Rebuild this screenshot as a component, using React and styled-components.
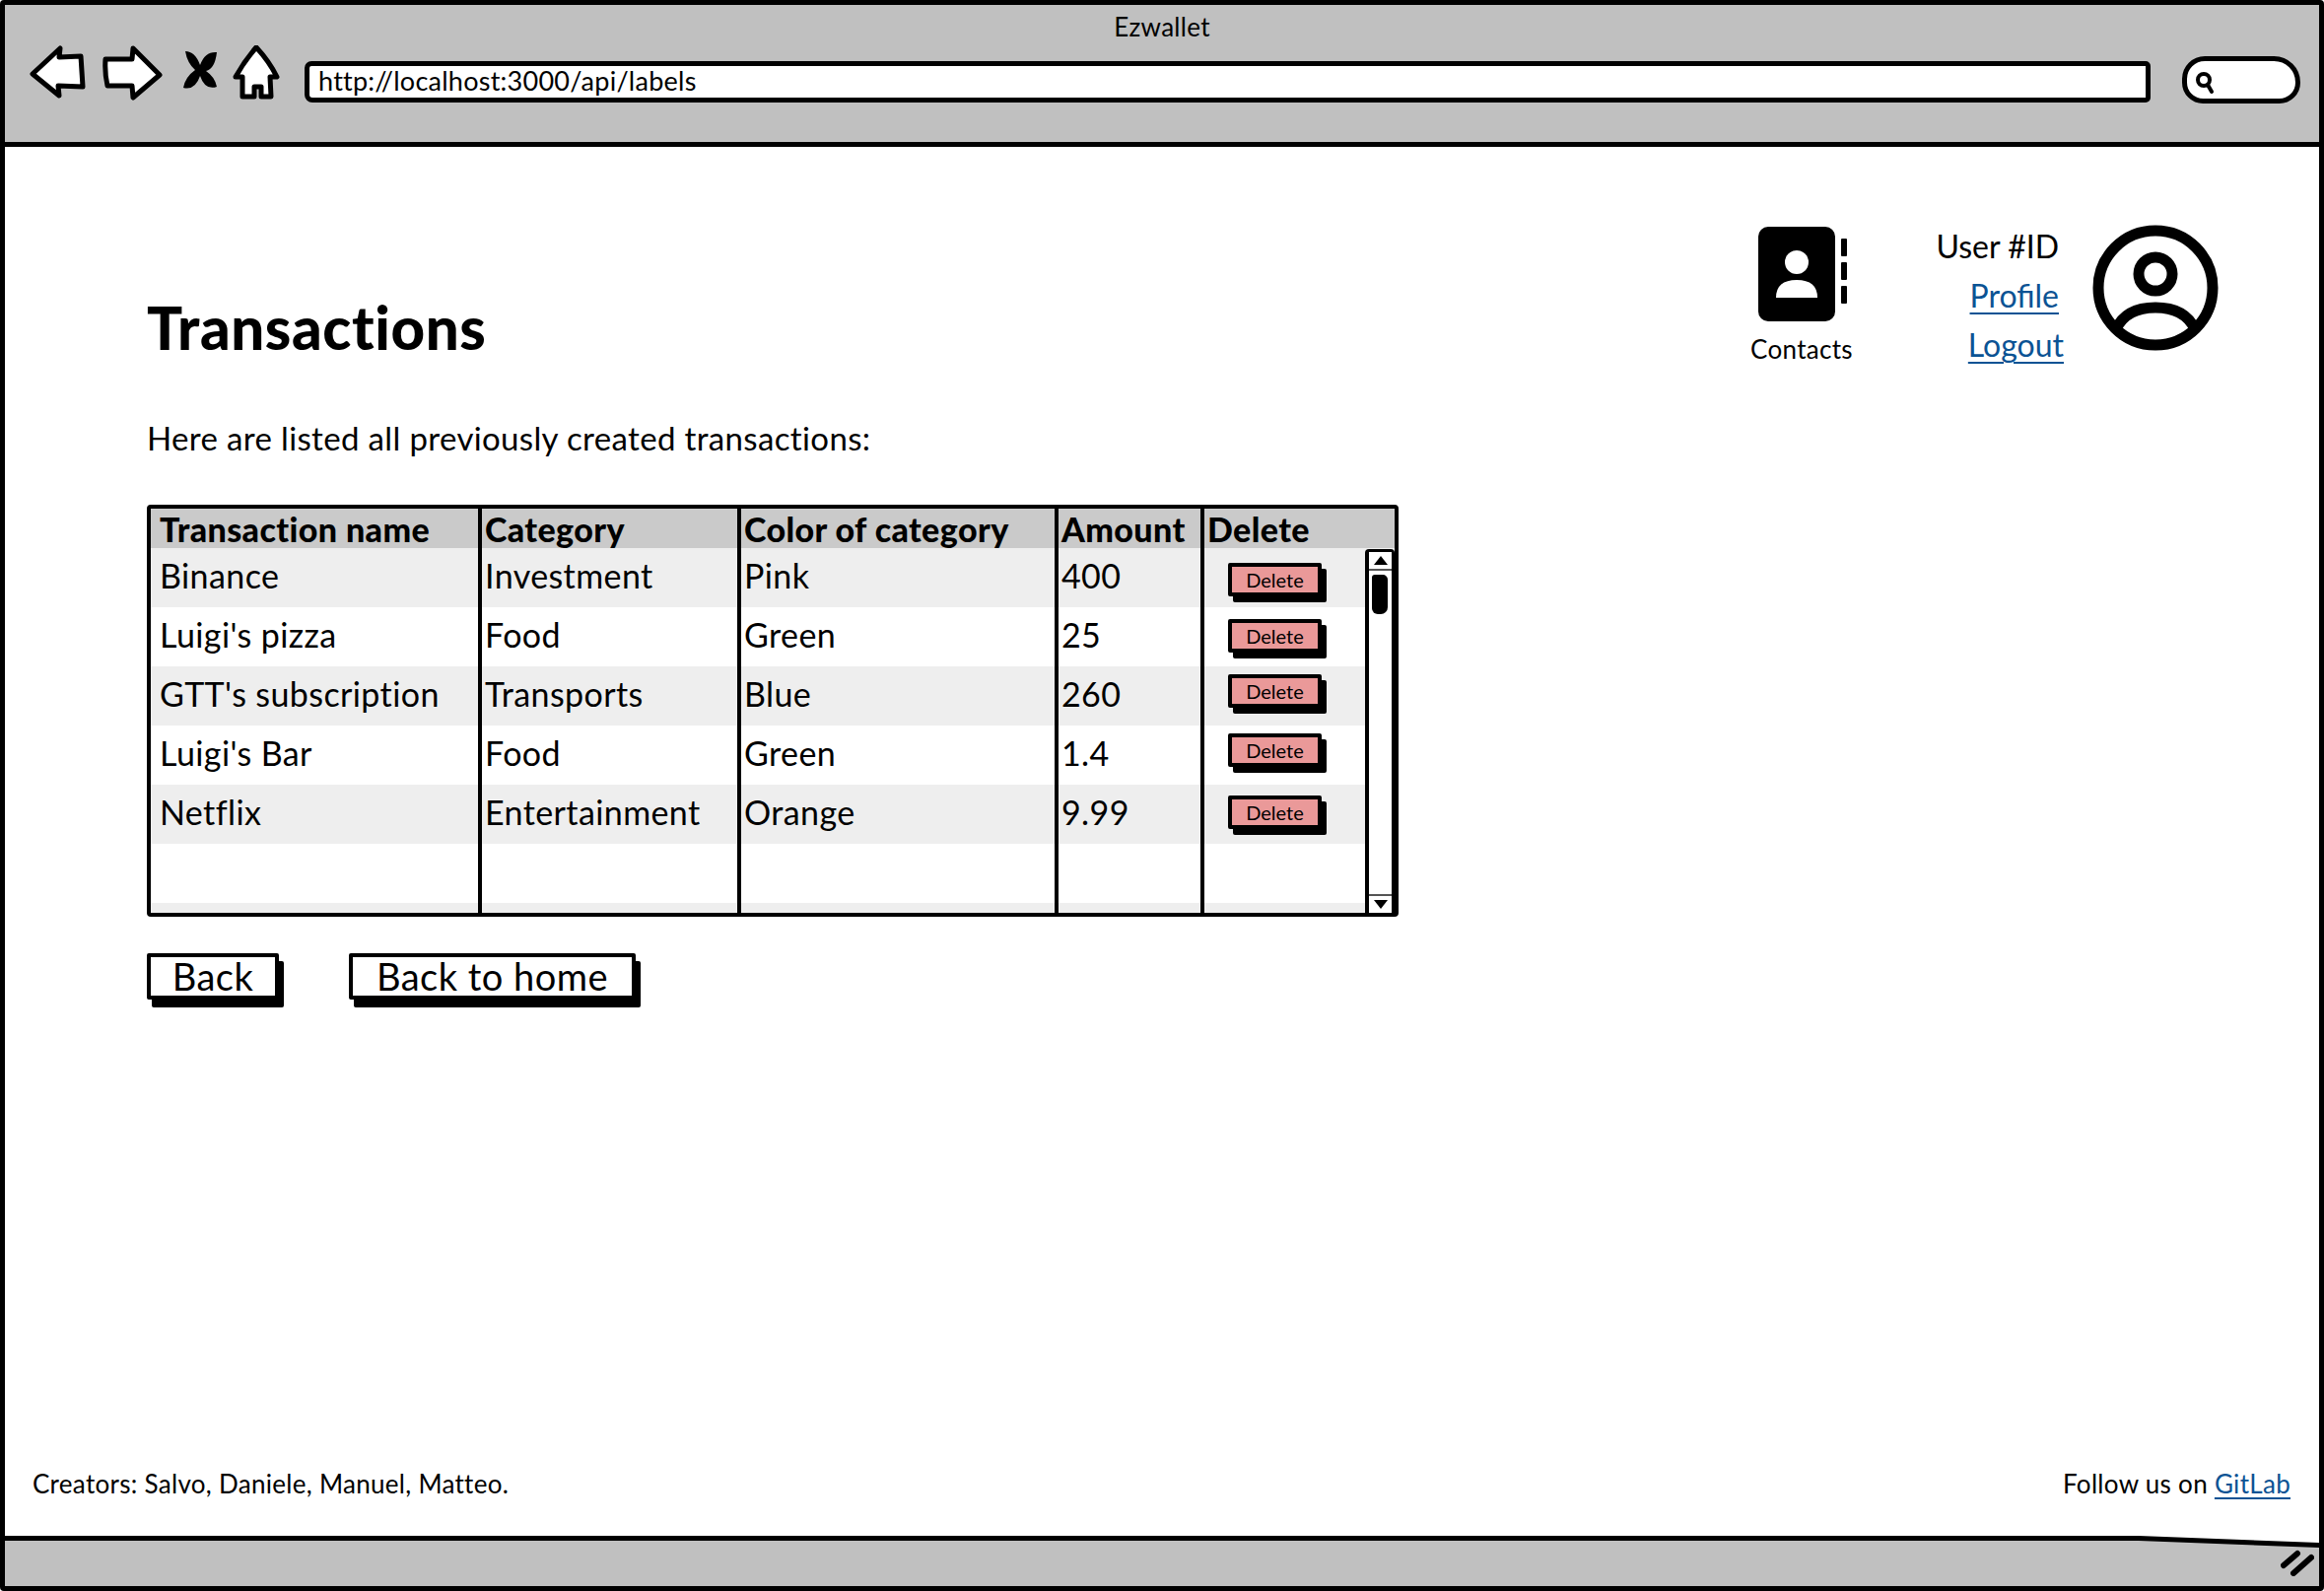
import styled, { createGlobalStyle } from 'styled-components';

const GlobalStyle = createGlobalStyle`
  html, body {
    margin: 0;
    padding: 0;
    background: #fff;
    font-family: "Lato", "Liberation Sans", sans-serif;
    color: #000;
  }
`;

const Frame = styled.div`
  box-sizing: border-box;
  width: 2358px;
  height: 1614px;
  border: 5px solid #000;
  border-radius: 4px;
  display: flex;
  flex-direction: column;
  background: #fff;
  overflow: hidden;
`;

const TopBar = styled.header`
  box-sizing: border-box;
  height: 144px;
  flex: none;
  background: #c0c0c0;
  border-bottom: 5px solid #000;
`;

const WindowTitle = styled.div`
  height: 41px;
  line-height: 44px;
  text-align: center;
  font-size: 26px;
  letter-spacing: 0.3px;
`;

const Toolbar = styled.div`
  display: flex;
  align-items: flex-start;
  padding-left: 25px;
  padding-right: 19px;
`;

const NavIcons = styled.svg`
  width: 265px;
  height: 56px;
  flex: none;
  margin-right: 14px;
`;

const UrlBar = styled.div`
  box-sizing: border-box;
  flex: 1;
  height: 42px;
  margin-top: 16px;
  margin-right: 32px;
  padding-left: 9px;
  background: #fff;
  border: 5px solid #000;
  border-radius: 7px 5px 5px 8px;
  font-size: 27px;
  line-height: 30px;
  letter-spacing: 0.25px;
`;

const SearchBox = styled.div`
  box-sizing: border-box;
  width: 120px;
  height: 48px;
  flex: none;
  margin-top: 11px;
  padding: 9px 0 0 7px;
  background: #fff;
  border: 5px solid #000;
  border-radius: 26px 30px 24px 24px;
`;

const SearchGlyph = styled.svg`
  display: block;
  width: 24px;
  height: 26px;
`;

const Content = styled.main`
  flex: 1;
  display: flex;
  flex-direction: column;
`;

const HeaderRow = styled.div`
  display: flex;
  align-items: flex-start;
  height: 226px;
  box-sizing: border-box;
  padding: 79px 102px 0 144px;
`;

const Title = styled.h1`
  margin: 69px auto 0 0;
  font-size: 60px;
  line-height: 70px;
  font-weight: 900;
  letter-spacing: 0.6px;
`;

const ContactsBlock = styled.div`
  width: 106px;
  margin-top: 2px;
  margin-right: 68px;
  display: flex;
  flex-direction: column;
  align-items: center;
`;

const ContactsIcon = styled.svg`
  width: 92px;
  height: 96px;
  margin-left: 4px;
`;

const ContactsLabel = styled.span`
  margin-top: 12px;
  font-size: 26px;
  line-height: 32px;
  letter-spacing: 0.3px;
`;

const UserBlock = styled.div`
  width: 140px;
  margin-top: -3px;
  margin-right: 34px;
  display: flex;
  flex-direction: column;
  align-items: flex-end;
  font-size: 32px;
  line-height: 50px;
`;

const UserLink = styled.a`
  color: #0b5394;
  text-decoration: underline;
  text-decoration-thickness: 2px;
  text-underline-offset: 5px;
  margin-right: ${p => p.$shift || 0}px;
`;

const Avatar = styled.svg`
  width: 128px;
  height: 128px;
  flex: none;
`;

const Intro = styled.p`
  margin: 49px 0 0 144px;
  font-size: 33px;
  line-height: 40px;
  letter-spacing: 0.35px;
`;

const Table = styled.div`
  position: relative;
  box-sizing: border-box;
  width: 1270px;
  height: 418px;
  margin: 48px 0 0 144px;
  border: 4px solid #000;
  border-radius: 4px;
  overflow: hidden;
`;

const Row = styled.div`
  display: grid;
  grid-template-columns: 336px 263px 322px 148px 1fr;
  height: ${p => (p.$head ? 40 : 60)}px;
  background: ${p => p.$bg};
`;

const Cell = styled.div`
  box-sizing: border-box;
  display: flex;
  align-items: ${p => (p.$top ? 'flex-start' : 'center')};
  padding-left: ${p => p.$pad}px;
  padding-bottom: ${p => (p.$top ? 0 : 6)}px;
  border-right: ${p => (p.$last ? 'none' : '4px solid #000')};
  font-size: 34px;
  font-weight: ${p => (p.$head ? 900 : 400)};
  letter-spacing: 0.4px;
  white-space: nowrap;
`;

const DeleteButton = styled.button`
  box-sizing: border-box;
  width: 95px;
  height: 34px;
  margin: ${p => p.$top}px 0 0 24px;
  padding: 0;
  background: #ea9999;
  border: 4px solid #000;
  border-radius: 2px;
  box-shadow: 5px 6px 0 #000;
  font-family: inherit;
  font-size: 20px;
  color: #000;
`;

const Scrollbar = styled.div`
  position: absolute;
  top: 41px;
  right: 0;
  bottom: 0;
  box-sizing: border-box;
  width: 30px;
  display: flex;
  flex-direction: column;
  background: #fff;
  border-left: 4px solid #000;
  border-right: 3px solid #000;
  border-top: 3px solid #000;
  border-radius: 4px 4px 0 0;
`;

const ScrollEnd = styled.div`
  flex: none;
  height: 17px;
  display: flex;
  align-items: center;
  justify-content: center;
  border-${p => (p.$down ? 'top' : 'bottom')}: 2px solid #555;
  margin-${p => (p.$down ? 'top' : 'bottom')}: ${p => (p.$down ? 'auto' : '4px')};
  &::before {
    content: "";
    border-left: 7px solid transparent;
    border-right: 7px solid transparent;
    border-${p => (p.$down ? 'top' : 'bottom')}: 9px solid #000;
  }
`;

const ScrollThumb = styled.div`
  width: 16px;
  height: 40px;
  margin-left: 3px;
  background: #000;
  border-radius: 3px 5px 7px 6px;
`;

const ButtonRow = styled.div`
  display: flex;
  gap: 71px;
  margin: 37px 0 0 144px;
`;

const NavButton = styled.button`
  box-sizing: border-box;
  width: ${p => p.$w}px;
  height: 47px;
  padding: 0 0 2px;
  background: #fff;
  border: 4px solid #000;
  border-radius: 2px;
  box-shadow: 5px 8px 0 #000;
  font-family: inherit;
  font-size: 38px;
  line-height: 38px;
  letter-spacing: 0.5px;
  color: #000;
`;

const FooterRow = styled.footer`
  margin-top: auto;
  display: flex;
  justify-content: space-between;
  padding: 0 29px 38px 28px;
  font-size: 26px;
  line-height: 30px;
  letter-spacing: 0.3px;
`;

const FooterLink = styled.a`
  color: #0b5394;
  text-decoration: underline;
  text-underline-offset: 4px;
`;

const StatusEdge = styled.div`
  flex: none;
  height: 51px;
  background: #000;
  clip-path: polygon(0 0, 2165px 0, 100% 7px, 100% 100%, 0 100%);
`;

const StatusFill = styled.div`
  box-sizing: border-box;
  height: 46px;
  margin-top: 5px;
  padding: 8px 5px 0 0;
  display: flex;
  justify-content: flex-end;
  background: #c0c0c0;
  clip-path: polygon(0 0, 2165px 0, 100% 7px, 100% 100%, 0 100%);
`;

const ResizeMark = styled.svg`
  width: 34px;
  height: 28px;
`;

const ROWS = [
  { name: 'Binance', category: 'Investment', color: 'Pink', amount: '400', top: 15 },
  { name: "Luigi's pizza", category: 'Food', color: 'Green', amount: '25', top: 12 },
  { name: "GTT's subscription", category: 'Transports', color: 'Blue', amount: '260', top: 8 },
  { name: "Luigi's Bar", category: 'Food', color: 'Green', amount: '1.4', top: 8 },
  { name: 'Netflix', category: 'Entertainment', color: 'Orange', amount: '9.99', top: 11 },
  { name: '', category: '', color: '', amount: '' },
  { name: '', category: '', color: '', amount: '' },
];

function App() {
  return (
    <>
      <GlobalStyle />
      <Frame>
        <TopBar>
          <WindowTitle>Ezwallet</WindowTitle>
          <Toolbar>
            <NavIcons viewBox="30 46 265 56">
              <g fill="#fff" stroke="#000" strokeWidth="5" strokeLinejoin="round">
                <path d="M33 75 L61 49 L60 58 L82 57 L84 88 L59 87 L60 97 Z" />
                <path d="M107 60 L134 60 L135 49 L162 76 L135 99 L134 87 L109 87 Q106 74 107 60 Z" />
                <path d="M260 48 Q273 62 281 78 L274 78 L275 98 L265 98 L265 88 L258 88 L258 98 L246 98 L246 78 L239 78 Q248 62 260 48 Z" />
              </g>
              <path d="M188 52 Q198 52 203 66 Q208 52 220 53 Q218 70 209 72 Q218 78 220 88 Q208 92 203 77 Q198 92 186 89 Q188 78 198 71 Q190 64 188 52 Z" fill="#000" />
            </NavIcons>
            <UrlBar>http://localhost:3000/api/labels</UrlBar>
            <SearchBox>
              <SearchGlyph viewBox="0 0 24 26">
                <circle cx="10" cy="10" r="6" fill="none" stroke="#000" strokeWidth="4" />
                <path d="M14 15 L18 22" stroke="#000" strokeWidth="4" strokeLinecap="round" />
              </SearchGlyph>
            </SearchBox>
          </Toolbar>
        </TopBar>

        <Content>
          <HeaderRow>
            <Title>Transactions</Title>
            <ContactsBlock>
              <ContactsIcon viewBox="0 0 92 96">
                <rect x="0" y="0" width="78" height="96" rx="10" fill="#000" />
                <rect x="84" y="12" width="6" height="18" rx="1" fill="#000" />
                <rect x="84" y="36" width="6" height="18" rx="1" fill="#000" />
                <rect x="84" y="60" width="6" height="18" rx="1" fill="#000" />
                <ellipse cx="39" cy="36" rx="12" ry="12" fill="#fff" />
                <path d="M18 72 Q18 54 39 54 Q60 54 60 72 Z" fill="#fff" />
              </ContactsIcon>
              <ContactsLabel>Contacts</ContactsLabel>
            </ContactsBlock>
            <UserBlock>
              <span>User #ID</span>
              <UserLink href="#">Profile</UserLink>
              <UserLink href="#" $shift={-5}>Logout</UserLink>
            </UserBlock>
            <Avatar viewBox="0 0 128 128">
              <circle cx="64" cy="64" r="58" fill="none" stroke="#000" strokeWidth="11" />
              <circle cx="64" cy="50" r="17" fill="none" stroke="#000" strokeWidth="11" />
              <path d="M24 106 Q34 84 64 84 Q94 84 104 106" fill="none" stroke="#000" strokeWidth="11" />
            </Avatar>
          </HeaderRow>

          <Intro>Here are listed all previously created transactions:</Intro>

          <Table>
            <Row $head $bg="#cacaca">
              <Cell $head $pad={9}>Transaction name</Cell>
              <Cell $head $pad={3}>Category</Cell>
              <Cell $head $pad={3}>Color of category</Cell>
              <Cell $head $pad={3}>Amount</Cell>
              <Cell $head $pad={3} $last>Delete</Cell>
            </Row>
            {ROWS.map((row, i) => (
              <Row key={i} $bg={i % 2 === 0 ? '#eeeeee' : '#ffffff'}>
                <Cell $pad={9}>{row.name}</Cell>
                <Cell $pad={3}>{row.category}</Cell>
                <Cell $pad={3}>{row.color}</Cell>
                <Cell $pad={3}>{row.amount}</Cell>
                <Cell $pad={0} $last $top>
                  {row.top && <DeleteButton $top={row.top}>Delete</DeleteButton>}
                </Cell>
              </Row>
            ))}
            <Scrollbar>
              <ScrollEnd />
              <ScrollThumb />
              <ScrollEnd $down />
            </Scrollbar>
          </Table>

          <ButtonRow>
            <NavButton $w={134}>Back</NavButton>
            <NavButton $w={291}>Back to home</NavButton>
          </ButtonRow>

          <FooterRow>
            <span>Creators: Salvo, Daniele, Manuel, Matteo.</span>
            <span>Follow us on <FooterLink href="#">GitLab</FooterLink></span>
          </FooterRow>
        </Content>

        <StatusEdge>
          <StatusFill>
            <ResizeMark viewBox="0 0 34 28">
              <path d="M3 17 L17 5 M13 25 L31 9" stroke="#000" strokeWidth="6" strokeLinecap="round" />
            </ResizeMark>
          </StatusFill>
        </StatusEdge>
      </Frame>
    </>
  );
}

export default App;
